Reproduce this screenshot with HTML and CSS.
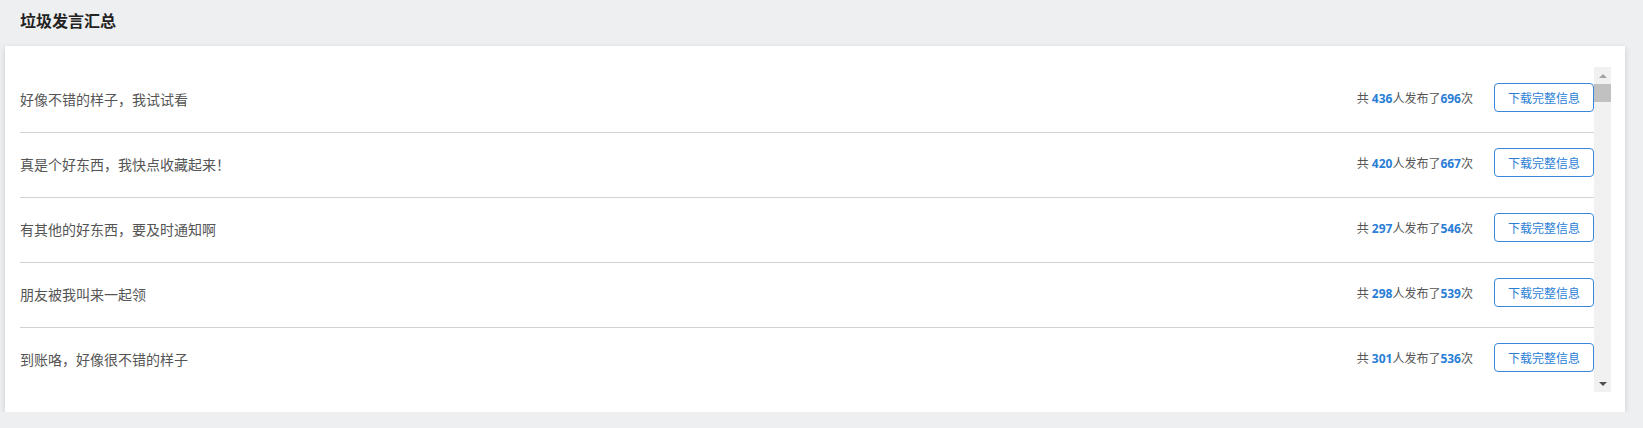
FILE: index.html
```html
<!DOCTYPE html>
<html>
  <head>
    <meta charset="utf-8">
    <title>垃圾发言汇总</title>
    <link rel="stylesheet" href="styles.css">
  </head>
  <body>
    <h2 class="page-title">垃圾发言汇总</h2>
    <div class="card">
      <div class="list-wrap">
        <ul class="list">
          <li class="row">
            <span class="msg">好像不错的样子，我试试看</span>
            <div class="side">
              <span class="stats">共 <b>436</b>人发布了<b>696</b>次</span>
              <button class="btn">下载完整信息</button>
            </div>
          </li>
          <li class="row">
            <span class="msg">真是个好东西，我快点收藏起来！</span>
            <div class="side">
              <span class="stats">共 <b>420</b>人发布了<b>667</b>次</span>
              <button class="btn">下载完整信息</button>
            </div>
          </li>
          <li class="row">
            <span class="msg">有其他的好东西，要及时通知啊</span>
            <div class="side">
              <span class="stats">共 <b>297</b>人发布了<b>546</b>次</span>
              <button class="btn">下载完整信息</button>
            </div>
          </li>
          <li class="row">
            <span class="msg">朋友被我叫来一起领</span>
            <div class="side">
              <span class="stats">共 <b>298</b>人发布了<b>539</b>次</span>
              <button class="btn">下载完整信息</button>
            </div>
          </li>
          <li class="row">
            <span class="msg">到账咯，好像很不错的样子</span>
            <div class="side">
              <span class="stats">共 <b>301</b>人发布了<b>536</b>次</span>
              <button class="btn">下载完整信息</button>
            </div>
          </li>
        </ul>
        <!-- scrollbar drawn by hand, headless hides the real one -->
        <div class="scrollbar">
          <div class="sb-btn"><i class="arrow-up"></i></div>
          <div class="sb-track"><div class="sb-thumb"></div></div>
          <div class="sb-btn"><i class="arrow-down"></i></div>
        </div>
      </div>
    </div>
  </body>
</html>
```

FILE: styles.css
```css
body {
  margin: 0;
  background: #eeeff1;
  font-family: "Noto Sans", "Noto Sans CJK SC", sans-serif;
  color: #555;
}

.page-title {
  margin: 0;
  height: 46px;
  line-height: 42px;
  padding-left: 20px;
  font-size: 16px;
  font-weight: bold;
  color: #222;
}

.card {
  background: #fff;
  margin: 0 18px 0 5px;
  padding: 21px 14px 20px 15px;
  box-shadow: 0 2px 6px rgba(0,0,0,0.15);
}

.list-wrap { display: flex; height: 325px; }

.list {
  flex: 1;
  list-style: none;
  margin: 0;
  padding: 1px 0 0 0;
  overflow: hidden;
}

.row {
  display: flex;
  align-items: center;
  justify-content: space-between;
  height: 65px;
  box-sizing: border-box;
  border-bottom: 1px solid #d2d2d2;
}

.msg { font-size: 14px; color: #555; padding-bottom: 2px; }

.side { display: flex; align-items: center; margin-bottom: 5px; }

.stats { font-size: 12px; color: #555; margin-right: 21px; }
.stats b { color: #2a7ed6; font-weight: bold; }

.btn {
  width: 100px;
  height: 29px;
  padding: 0;
  background: #fff;
  border: 1px solid #3a88dc;
  border-radius: 4px;
  color: #2a7ed6;
  font-family: inherit;
  font-size: 12px;
}

.scrollbar {
  width: 17px;
  background: #f1f1f1;
  display: flex;
  flex-direction: column;
}

.sb-btn { height: 17px; display: flex; align-items: center; justify-content: center; }
.sb-track { flex: 1; }
.sb-thumb { height: 18px; background: #c1c1c1; }

.arrow-up, .arrow-down {
  width: 0; height: 0;
  border-left: 4px solid transparent;
  border-right: 4px solid transparent;
}
.arrow-up { border-bottom: 4px solid #a3a3a3; }
.arrow-down { border-top: 4px solid #505050; }
```
